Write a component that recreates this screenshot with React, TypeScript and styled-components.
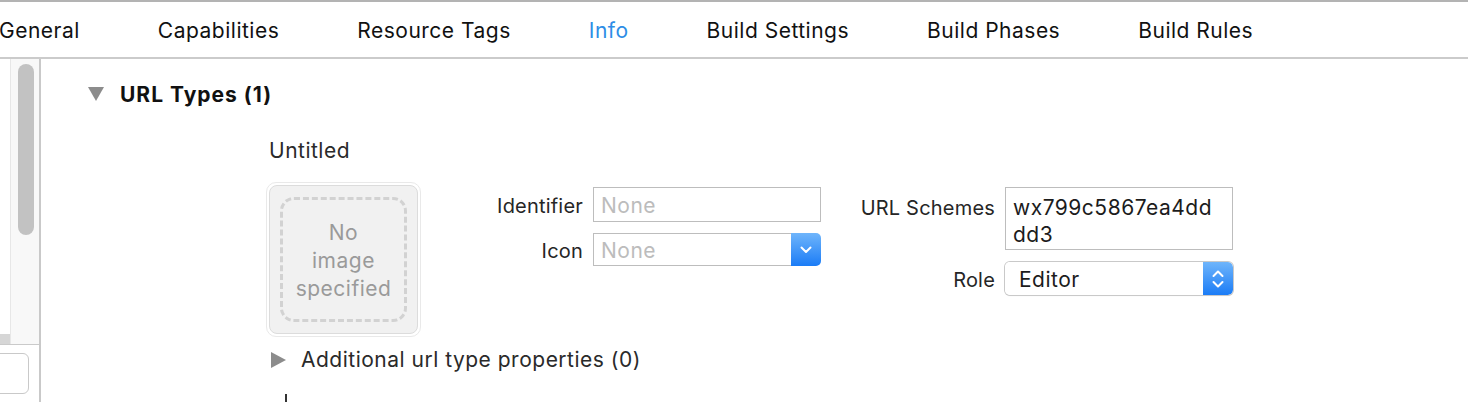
import styled, { createGlobalStyle } from "styled-components";

const GlobalStyle = createGlobalStyle`
  html, body {
    margin: 0;
    padding: 0;
    background: white;
  }
  body {
    font-family: Inter, "Noto Sans", "Liberation Sans", sans-serif;
    color: #262626;
    letter-spacing: 0.5px;
  }
`;

const Page = styled.div`
  width: 1468px;
  height: 402px;
  overflow: hidden;
  display: flex;
  flex-direction: column;
  background: white;
`;

const TabBar = styled.div`
  height: 59px;
  flex-shrink: 0;
  box-sizing: border-box;
  padding-top: 2px;
  border-top: 2px solid #b3b3b3;
  border-bottom: 2px solid #cbcbcb;
  display: flex;
  align-items: center;
  gap: 78px;
  margin-left: -1px;
`;

const Tab = styled.div<{ $active?: boolean }>`
  font-size: 21px;
  color: ${(p) => (p.$active ? "#2d8de6" : "#111")};
  white-space: nowrap;
`;

const Body = styled.div`
  flex: 1;
  display: flex;
  min-height: 0;
`;

const Sidebar = styled.div`
  width: 39px;
  flex-shrink: 0;
  border-right: 2px solid #c9c9c9;
  display: flex;
  flex-direction: column;
`;

const ScrollArea = styled.div`
  height: 285px;
  display: flex;
  border-bottom: 1px solid #cacaca;
`;

const Gutter = styled.div`
  width: 10px;
  display: flex;
  flex-direction: column;
  justify-content: flex-end;
`;

const CornerBlock = styled.div`
  height: 10px;
  background: #d6d6d6;
`;

const Track = styled.div`
  flex: 1;
  background: #f8f8f8;
  border-left: 1px solid #e7e7e7;
  padding: 5px 0 0 7px;
`;

const Thumb = styled.div`
  width: 16px;
  height: 171px;
  border-radius: 8px;
  background: #c2c2c2;
`;

const FilterField = styled.div`
  margin: 8px 0 0 -14px;
  width: 41px;
  height: 39px;
  border: 1px solid #c9c9c9;
  border-radius: 6px;
  background: white;
`;

const Content = styled.div`
  flex: 1;
  padding: 26px 0 0 47px;
  display: flex;
  flex-direction: column;
`;

const SectionHeader = styled.div`
  display: flex;
  align-items: center;
  gap: 16px;
  height: 18px;
`;

const SectionTitle = styled.div`
  font-size: 21px;
  font-weight: 700;
  letter-spacing: 1px;
  color: #111;
  padding-top: 1px;
`;

const TypeBlock = styled.div`
  margin-left: 181px;
  margin-top: 35px;
  display: flex;
  flex-direction: column;
`;

const TypeName = styled.div`
  font-size: 21px;
  line-height: 24px;
  padding-top: 1px;
  margin-bottom: -1px;
  color: #2a2a2a;
`;

const FieldsRow = styled.div`
  display: flex;
  align-items: flex-start;
  margin-top: 20px;
  margin-left: -3px;
`;

const ImageWell = styled.div`
  width: 149px;
  height: 149px;
  border: 1px solid #e9e9e9;
  border-radius: 10px;
  padding: 2px;
  flex-shrink: 0;
`;

const WellInner = styled.div`
  width: 100%;
  height: 100%;
  box-sizing: border-box;
  background: #f1f1f1;
  border: 1px solid #dcdcdc;
  border-radius: 8px;
  padding: 11px 10px;
`;

const DashedBox = styled.div`
  width: 100%;
  height: 100%;
  box-sizing: border-box;
  padding-top: 2px;
  border: 3px dashed #d2d2d2;
  border-radius: 14px;
  display: flex;
  align-items: center;
  justify-content: center;
  text-align: center;
  color: #9a9a9a;
  font-size: 21px;
  line-height: 28px;
`;

const FormGrid = styled.div<{ $offset: number; $rowGap: number }>`
  display: grid;
  grid-template-columns: 140px 228px;
  column-gap: 10px;
  row-gap: ${(p) => p.$rowGap}px;
  margin-left: ${(p) => p.$offset}px;
  margin-top: 5px;
`;

const Label = styled.div<{ $top?: number }>`
  justify-self: end;
  align-self: ${(p) => (p.$top !== undefined ? "start" : "center")};
  padding-top: ${(p) => p.$top ?? 3}px;
  font-size: 20px;
  letter-spacing: 0.2px;
  color: #262626;
  white-space: nowrap;
`;

const TextInput = styled.div<{ $placeholder?: boolean }>`
  height: 35px;
  box-sizing: border-box;
  border: 1px solid #bdbdbd;
  padding: 2px 7px 0;
  display: flex;
  align-items: center;
  font-size: 21px;
  color: ${(p) => (p.$placeholder ? "#bcbcbc" : "#1c1c1c")};
`;

const TextArea = styled.div`
  height: 63px;
  box-sizing: border-box;
  border: 1px solid #bdbdbd;
  padding: 6px 14px 4px 7px;
  font-size: 21px;
  line-height: 27px;
  color: #1c1c1c;
  word-break: break-all;
`;

const Combo = styled.div`
  height: 33px;
  display: flex;
`;

const ComboField = styled.div`
  flex: 1;
  box-sizing: border-box;
  border: 1px solid #bdbdbd;
  border-right: none;
  padding: 2px 7px 0;
  display: flex;
  align-items: center;
  font-size: 21px;
  color: #bcbcbc;
`;

const BlueButton = styled.div`
  width: 30px;
  flex-shrink: 0;
  background: linear-gradient(#6fb5fb, #1b7cf6);
  border-radius: 0 5px 5px 0;
  display: flex;
  align-items: center;
  justify-content: center;
`;

const Popup = styled.div`
  height: 33px;
  display: flex;
  border-radius: 5px;
  box-shadow: 0 0 0 1px #c9c9c9, 0 1px 1px rgba(0, 0, 0, 0.15);
  overflow: hidden;
`;

const PopupValue = styled.div`
  flex: 1;
  padding: 2px 0 0 14px;
  display: flex;
  align-items: center;
  font-size: 21px;
  color: #1c1c1c;
  background: white;
`;

const Disclosure = styled.div`
  display: flex;
  align-items: center;
  gap: 15px;
  margin-top: 10px;
  margin-left: 2px;
  font-size: 21px;
  color: #2a2a2a;
`;

const Caret = styled.div`
  width: 2px;
  height: 12px;
  background: #333;
  margin: 22px 0 0 16px;
`;

const DownTriangle = () => (
  <svg width="16" height="14" viewBox="0 0 16 14">
    <path d="M0 0 H16 L8 14 Z" fill="#8c8c8c" />
  </svg>
);

const RightTriangle = () => (
  <svg width="15" height="16" viewBox="0 0 15 16">
    <path d="M0 0 L15 8 L0 16 Z" fill="#8c8c8c" />
  </svg>
);

const ChevronDown = () => (
  <svg width="12" height="8" viewBox="0 0 12 8">
    <path d="M1.5 1.5 L6 6 L10.5 1.5" stroke="white" strokeWidth="2" fill="none" strokeLinecap="round" strokeLinejoin="round" />
  </svg>
);

const ChevronUpDown = () => (
  <svg width="12" height="20" viewBox="0 0 12 20">
    <path d="M1.5 7 L6 2.5 L10.5 7" stroke="white" strokeWidth="2" fill="none" strokeLinecap="round" strokeLinejoin="round" />
    <path d="M1.5 13 L6 17.5 L10.5 13" stroke="white" strokeWidth="2" fill="none" strokeLinecap="round" strokeLinejoin="round" />
  </svg>
);

const tabs = [
  "General",
  "Capabilities",
  "Resource Tags",
  "Info",
  "Build Settings",
  "Build Phases",
  "Build Rules",
];

export default function App() {
  return (
    <Page>
      <GlobalStyle />
      <TabBar>
        {tabs.map((t) => (
          <Tab key={t} $active={t === "Info"}>
            {t}
          </Tab>
        ))}
      </TabBar>
      <Body>
        <Sidebar>
          <ScrollArea>
            <Gutter>
              <CornerBlock />
            </Gutter>
            <Track>
              <Thumb />
            </Track>
          </ScrollArea>
          <FilterField />
        </Sidebar>
        <Content>
          <SectionHeader>
            <DownTriangle />
            <SectionTitle>URL Types (1)</SectionTitle>
          </SectionHeader>
          <TypeBlock>
            <TypeName>Untitled</TypeName>
            <FieldsRow>
              <ImageWell>
                <WellInner>
                  <DashedBox>
                    No
                    <br />
                    image
                    <br />
                    specified
                  </DashedBox>
                </WellInner>
              </ImageWell>
              <FormGrid $offset={22} $rowGap={11}>
                <Label>Identifier</Label>
                <TextInput $placeholder>None</TextInput>
                <Label>Icon</Label>
                <Combo>
                  <ComboField>None</ComboField>
                  <BlueButton>
                    <ChevronDown />
                  </BlueButton>
                </Combo>
              </FormGrid>
              <FormGrid $offset={34} $rowGap={12}>
                <Label $top={9}>URL Schemes</Label>
                <TextArea>wx799c5867ea4dddd3</TextArea>
                <Label>Role</Label>
                <Popup>
                  <PopupValue>Editor</PopupValue>
                  <BlueButton>
                    <ChevronUpDown />
                  </BlueButton>
                </Popup>
              </FormGrid>
            </FieldsRow>
            <Disclosure>
              <RightTriangle />
              Additional url type properties (0)
            </Disclosure>
            <Caret />
          </TypeBlock>
        </Content>
      </Body>
    </Page>
  );
}
